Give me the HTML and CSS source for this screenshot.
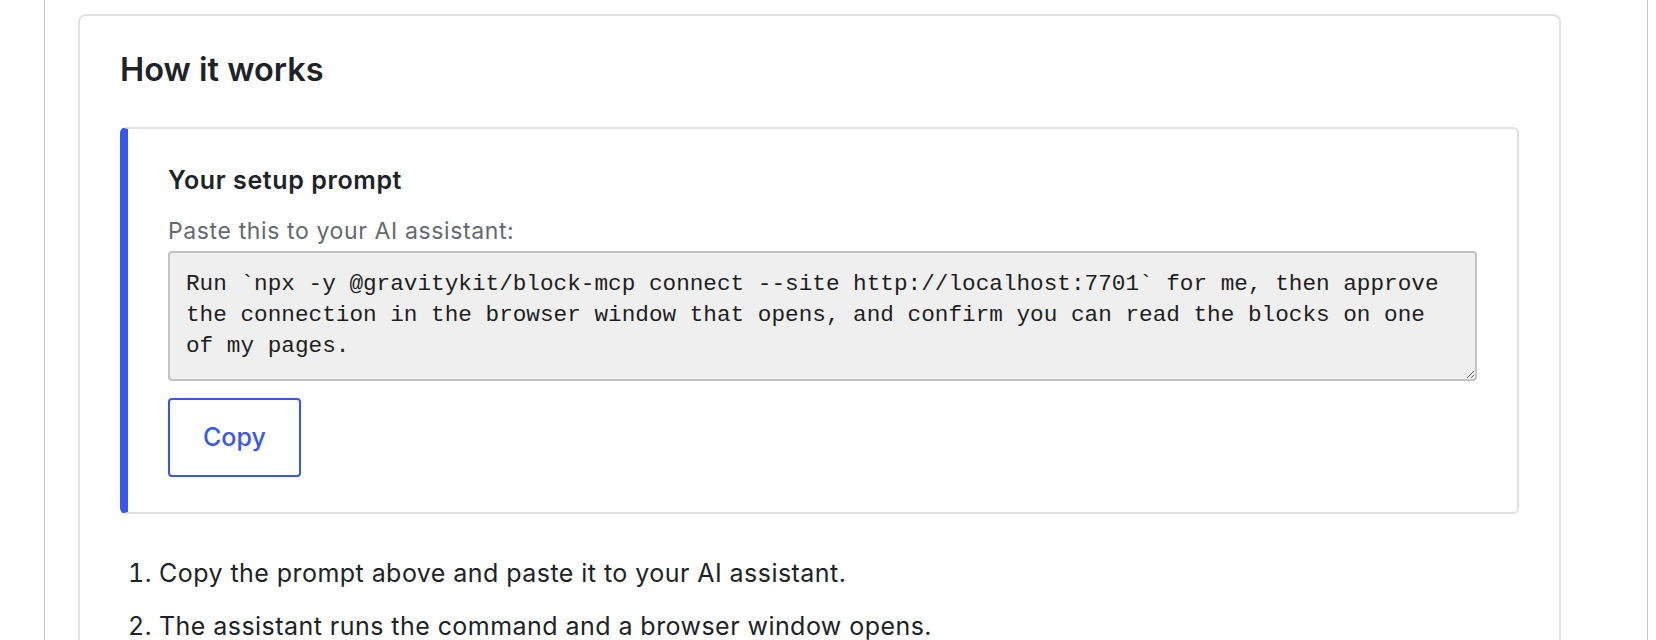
FILE: index.html
```html
<!DOCTYPE html>
<html lang="en">
<head>
<meta charset="utf-8">
<title>How it works</title>
<link rel="stylesheet" href="styles.css">
</head>
<body>
<div class="wrap">
  <section class="card">
    <h2 class="card-title">How it works</h2>
    <div class="prompt">
      <h3 class="prompt-title">Your setup prompt</h3>
      <label class="prompt-label" for="setup-prompt">Paste this to your AI assistant:</label>
      <textarea id="setup-prompt" class="prompt-text" readonly>Run `npx -y @gravitykit/block-mcp connect --site http://localhost:7701` for me, then approve the connection in the browser window that opens, and confirm you can read the blocks on one of my pages.</textarea>
      <button class="copy-btn" type="button">Copy</button>
    </div>
    <ol class="steps">
      <li>Copy the prompt above and paste it to your AI assistant.</li>
      <li>The assistant runs the command and a browser window opens.</li>
    </ol>
  </section>
</div>
</body>
</html>
```

FILE: styles.css
```css
html, body {
  margin: 0;
  padding: 0;
  background: #ffffff;
  height: 100%;
  overflow: hidden;
}

body {
  font-family: Inter, "Noto Sans", "Liberation Sans", sans-serif;
  color: #1d2327;
}

.wrap {
  margin: 0 8px 0 44px;
  min-height: 100%;
  border-left: 1px solid #c3c4c7;
  border-right: 1px solid #c3c4c7;
  padding: 14px 0 0 33px;
  box-sizing: border-box;
}

.card {
  max-width: 1483px;
  box-sizing: border-box;
  border: 2px solid #e2e2e2;
  border-radius: 8px;
  padding: 0 40px 40px;
  min-height: 700px;
}

.card-title {
  margin: 34px 0 37px;
  font-size: 32.5px;
  line-height: 40px;
  font-weight: 600;
  color: #1d2327;
}

.prompt {
  border: 2px solid #e2e2e2;
  border-left: 8px solid #3858e9;
  border-radius: 6px;
  padding: 36px 40px 35px;
  display: flex;
  flex-direction: column;
  align-items: flex-start;
}

.prompt-title {
  margin: 0 0 22px;
  font-size: 25px;
  line-height: 30px;
  letter-spacing: 0.6px;
  font-weight: 600;
  color: #1d2327;
}

.prompt-label {
  display: block;
  font-size: 23px;
  line-height: 28px;
  letter-spacing: 0.62px;
  color: #646970;
  margin-bottom: 6px;
}

.prompt-text {
  align-self: stretch;
  box-sizing: border-box;
  height: 130px;
  margin: 0;
  padding: 16px 20px 16px 16px;
  border: 2px solid #c4c4c4;
  border-radius: 4px;
  background: #efefef;
  color: #1e1e1e;
  font-family: "Liberation Mono", "DejaVu Sans Mono", monospace;
  font-size: 22.7px;
  line-height: 31px;
  resize: vertical;
  overflow: hidden;
}

.copy-btn {
  margin-top: 17px;
  box-sizing: border-box;
  height: 79px;
  padding: 0 33px;
  border: 2px solid #3858e9;
  border-radius: 4px;
  background: #ffffff;
  color: #3858e9;
  font-family: Inter, "Noto Sans", "Liberation Sans", sans-serif;
  font-size: 25px;
  line-height: 75px;
  font-weight: 500;
}

.steps {
  margin: 41px 0 0;
  padding-left: 39px;
  font-size: 25px;
  line-height: 36px;
  letter-spacing: 0.45px;
  color: #1d2327;
}

.steps li {
  margin-bottom: 17px;
}
```
